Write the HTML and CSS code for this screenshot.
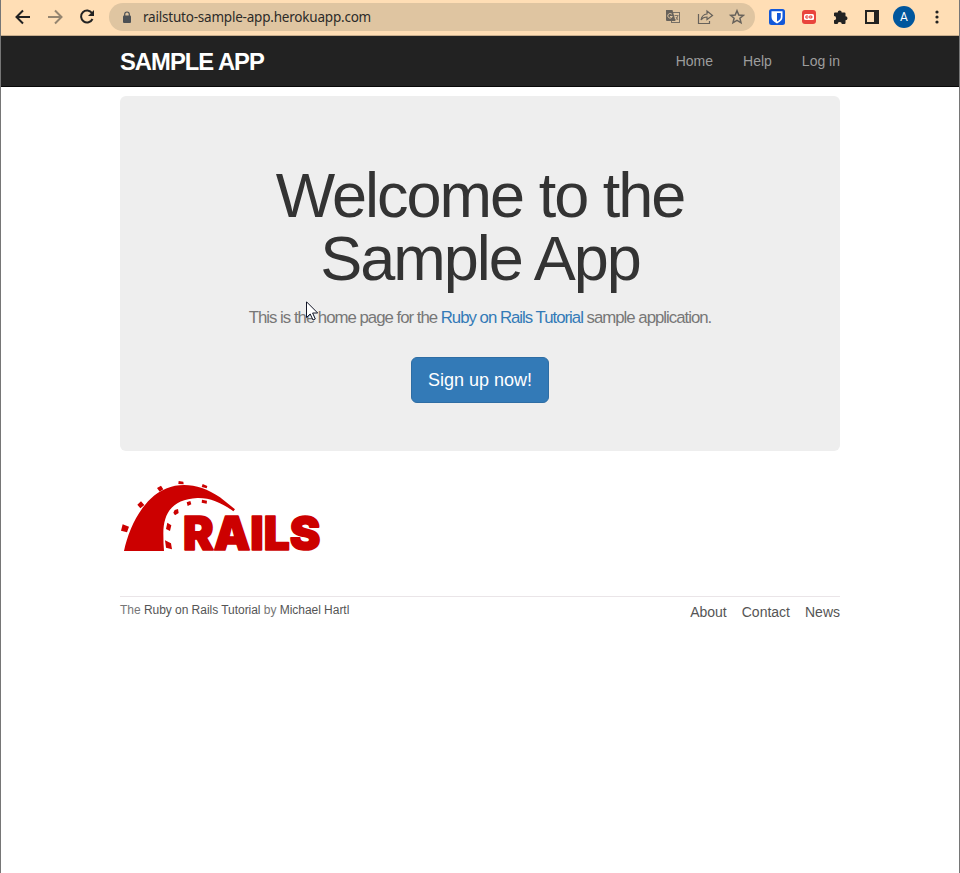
FILE: index.html
```html
<!DOCTYPE html>
<html lang="en">
<head>
<meta charset="utf-8">
<title>Sample App</title>
<link rel="stylesheet" href="styles.css">
</head>
<body>
<div class="window">
  <div class="toolbar">
    <svg class="nav-icons" width="100" height="35" viewBox="0 0 100 35" fill="none" stroke-width="2">
      <path d="M29 17H16M22 10.500L15.500 17L22 23.500" stroke="#222"/>
      <path d="M47 17H60M54 10.500L60.500 17L54 23.500" stroke="#958570"/>
      <path d="M91 13A6 6 0 1 0 91.500 19" stroke="#222"/>
      <path d="M93 10V16H87Z" fill="#222"/>
    </svg>
    <div class="address">
      <svg class="lock" width="10" height="13" viewBox="0 0 10 13"><rect x="1" y="4.500" width="8" height="7.500" rx="1" fill="#4c5054"/><path d="M2.700 5V3.300a2.300 2.300 0 0 1 4.600 0V5" fill="none" stroke="#4c5054" stroke-width="1.200"/></svg>
      <span class="url">railstuto-sample-app.herokuapp.com</span>
      <svg class="page-icons" width="80" height="18" viewBox="0 0 80 18" fill="none" stroke="#67625b">
        <rect x="6.500" y="4.500" width="8" height="10" stroke="#777066"/>
        <path d="M1 2H7.500L10.500 13H2Q1 13 1 12Z" fill="#67625b" stroke="none"/>
        <path d="M7 6.500A2.300 2.300 0 1 0 7.300 8.500H5" stroke="#dfc5a1"/>
        <path d="M9.500 7.500H13.500M12.800 8Q12 11 10.500 12M11 9L13 12" stroke-width=".8"/>
        <path d="M33.500 6V15.500H44.500V13" stroke-width="1.200"/>
        <path d="M36 12Q37 6.500 42 6V3L47.500 7.500L42 11.500V9Q38 9 36 12Z" stroke-width="1.200"/>
        <path d="M72 2.800L73.800 7.100L78.300 7.400L74.900 10.300L76 14.800L72 12.400L68 14.800L69.100 10.300L65.700 7.400L70.200 7.100Z" stroke-width="1.500"/>
      </svg>
    </div>
    <div class="extensions">
      <svg width="16" height="16" viewBox="0 0 16 16"><rect width="16" height="16" rx="2.500" fill="#1258d9"/><path d="M2.500 2.200H13.500V8Q13.500 12 8 14.400Q2.500 12 2.500 8Z" fill="#fff"/><path d="M8 4H11.800V8Q11.800 10.700 8 12.600Z" fill="#1258d9"/></svg>
      <svg width="14" height="14" viewBox="0 0 14 14"><rect width="14" height="14" rx="3" fill="#e9443c"/><rect x="2" y="4" width="10" height="6" rx="1.500" fill="#fff"/><path d="M6 5.800H4V8.200H6M7.700 5.800H9.500V8.200H7.700ZM3 7H11" stroke="#e9443c" stroke-width=".8" fill="none"/></svg>
      <svg width="15" height="15" viewBox="0 0 15 15" fill="#222"><path d="M1 3.500Q1 2.500 2 2.500H4.700A2 2 0 0 1 8.700 2.500H11.500Q12.500 2.500 12.500 3.500V6.200A2 2 0 0 1 12.500 10.200V13Q12.500 14 11.500 14H8.800A2.100 2.100 0 0 0 4.600 14H2Q1 14 1 13V10.300A2.100 2.100 0 0 0 1 6.100Z"/></svg>
      <svg width="14" height="14" viewBox="0 0 14 14"><path d="M0 0H14V14H0ZM2 2V12H9V2Z" fill="#222" fill-rule="evenodd"/></svg>
      <span class="avatar">A</span>
      <svg class="more" width="4" height="14" viewBox="0 0 4 14" fill="#222"><circle cx="2" cy="2" r="1.600"/><circle cx="2" cy="7" r="1.600"/><circle cx="2" cy="12" r="1.600"/></svg>
    </div>
  </div>
  <header class="navbar">
    <div class="container navbar-inner">
      <a class="logo">SAMPLE APP</a>
      <nav class="menu"><a>Home</a><a>Help</a><a>Log in</a></nav>
    </div>
  </header>
  <main class="container">
    <section class="jumbotron">
      <h1>Welcome to the Sample App</h1>
      <h2>This is the home page for the <a>Ruby on Rails Tutorial</a> sample application.</h2>
      <a class="button">Sign up now!</a>
    </section>
    <svg class="rails" width="200" height="72" viewBox="30 30 600 216" fill="#c00">
      <path d="M42 243C54 188 80 126 122 86C176 34 256 30 330 82L375 118L370 124C335 98 300 83 262 84C190 88 160 126 160 190Q160 220 162 243Z"/>
      <path d="M38 163L57 170L51 187L33 182ZM93 94L103 105L91 115L82 104ZM153 47L160 58L149 65L141 54ZM206 33L220 35L221 43L205 42ZM278 42L292 48L290 55L275 51ZM276 89L291 92L290 101L275 98ZM230 97L241 93L244 103L233 108ZM194 120L204 117L206 129L195 136L190 128ZM172 158L184 166L180 183L168 177ZM165 211L183 220L186 238L168 233Z"/>
      <text class="wordmark" x="219" y="240" textLength="412" lengthAdjust="spacingAndGlyphs">RAILS</text>
    </svg>
    <footer class="footer">
      <small>The <a>Ruby on Rails Tutorial</a> by <a>Michael Hartl</a></small>
      <nav class="footer-links"><a>About</a><a>Contact</a><a>News</a></nav>
    </footer>
  </main>
  <svg class="pointer" width="13" height="21" viewBox="0 0 13 21"><path d="M.5 .8V16.500L4.200 13L7 19L9.300 18L6.600 12H11.700Z" fill="#fff" stroke="#111526"/></svg>
</div>
</body>
</html>
```

FILE: styles.css
```css
* { box-sizing: border-box; }
body { margin: 0; font: 14px/20px "Liberation Sans", Arial, sans-serif; color: #333; background: #fff; }
.window { position: relative; height: 873px; border: solid #767676; border-width: 0 1px; overflow: hidden; }
.toolbar { display: flex; align-items: center; height: 36px; padding-bottom: 1px; background: #ffdeb5; border-bottom: 1px solid #c8ae8e; }
.nav-icons { flex: none; margin-right: 8px; }
.address { display: flex; align-items: center; width: 646px; height: 28px; padding: 0 10px 0 13px; border-radius: 14px; background: #dfc5a1; }
.lock { margin-right: 11px; }
.url { font: 13.5px/20px "Noto Sans", sans-serif; color: #2c2b29; letter-spacing: -.21px; }
.page-icons { margin-left: auto; }
.extensions { display: flex; align-items: center; flex: 1; padding-left: 14px; gap: 17px; }
.avatar { width: 22px; height: 22px; margin-left: -3px; border-radius: 50%; background: #00569d; color: #fff; font: 12px/22px Roboto, sans-serif; text-align: center; }
.more { margin-left: 3px; }
.navbar { height: 51px; background: #222; border-bottom: 1px solid #080808; }
.container { width: 720px; margin: 0 auto; }
.navbar-inner { display: flex; justify-content: space-between; align-items: center; height: 50px; }
.logo { padding-top: 2px; color: #fff; font-size: 23.8px; font-weight: bold; letter-spacing: -1px; }
.menu { display: flex; gap: 30px; color: #9d9d9d; }
.jumbotron { height: 355px; margin-top: 9px; padding: 68px 60px 0; background: #eee; border-radius: 6px; text-align: center; }
h1 { margin: 0 0 18px; font-size: 63px; line-height: 63px; font-weight: 400; letter-spacing: -2px; }
h2 { margin: 0 0 30px; font-size: 16.8px; line-height: 19px; font-weight: 400; letter-spacing: -1px; color: #777; }
h2 a { color: #337ab7; }
.button { display: inline-block; padding: 10px 16px; border: 1px solid #2e6da4; border-radius: 6px; background: #337ab7; color: #fff; font-size: 18px; line-height: 24px; }
.rails { display: block; margin-top: 29px; overflow: visible; }
.wordmark { font: 900 140px Inter, sans-serif; stroke: #c00; stroke-width: 5px; stroke-linejoin: round; }
.footer { display: flex; justify-content: space-between; margin-top: 44px; padding-top: 5px; border-top: 1px solid #eae5e8; color: #777; }
.footer small { font-size: 12px; line-height: 16px; letter-spacing: -.035px; }
.footer a { color: #555; }
.footer-links { display: flex; gap: 15px; }
.pointer { position: absolute; left: 305px; top: 301px; }
```
